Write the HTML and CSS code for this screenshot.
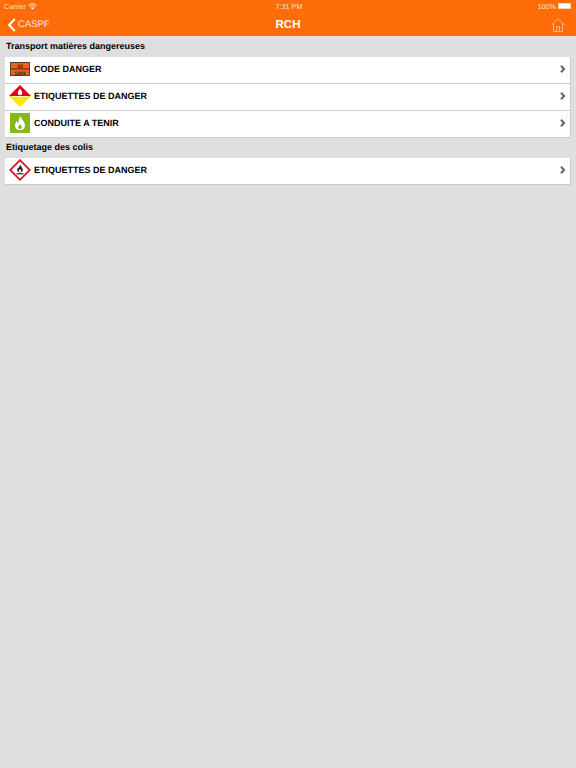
FILE: index.html
```html
<!DOCTYPE html>
<html lang="fr">
<head>
<meta charset="UTF-8">
<title>RCH</title>
<link rel="stylesheet" href="styles.css">
</head>
<body>
<div class="topbar">
  <div class="status">
    <div class="status-left">
      <span>Carrier</span>
      <svg class="wifi" width="9" height="7" viewBox="0 0 10 7"><path d="M5 7 3.400 5.200a2.300 2.300 0 0 1 3.200 0z" fill="#fff"/><path d="M1.900 3.800a4.400 4.400 0 0 1 6.200 0M.5 2.200a6.500 6.500 0 0 1 9 0" fill="none" stroke="#fff" stroke-width="1"/></svg>
    </div>
    <span class="status-time">7:31 PM</span>
    <div class="status-right">
      <span>100%</span>
      <span class="battery"></span>
    </div>
  </div>
  <div class="nav">
    <div class="nav-back">
      <svg width="8" height="14" viewBox="0 0 8 14"><path d="M6.800 1 1.200 7l5.600 6" fill="none" stroke="#fff" stroke-width="2"/></svg>
      <span>CASPF</span>
    </div>
    <div class="nav-title">RCH</div>
    <svg class="nav-home" width="14" height="14" viewBox="0 0 14 14"><path d="M.5 7 7 .7 13.500 7M2.500 5.500v8h9v-8M5.500 13.500V8.500h3v5" fill="none" stroke="#ffb27d" stroke-width="1"/></svg>
  </div>
</div>

<h2 class="section-title">Transport matières dangereuses</h2>
<div class="list">
  <div class="row">
    <svg class="row-icon" width="22" height="16" viewBox="0 0 22 16">
      <rect x="1.500" y="1.500" width="19" height="13" fill="#e8641c" stroke="#5a4030"/>
      <path d="M2 8h18" stroke="#4a2a10" stroke-width="1"/>
      <text x="11" y="6.500" class="plate-num">33</text>
      <text x="11" y="13.500" class="plate-num">1203</text>
    </svg>
    <span class="row-label">CODE DANGER</span>
    <svg class="chevron" width="5" height="8" viewBox="0 0 5 8"><path d="M1 .8 4 4 1 7.200" fill="none" stroke="#666" stroke-width="2"/></svg>
  </div>
  <div class="row">
    <svg class="row-icon" width="22" height="22" viewBox="0 0 22 22">
      <path d="M11 0 22 11H0z" fill="#e2001a"/>
      <path d="M0 11h22L11 22z" fill="#ffe600"/>
      <path d="M11 3.500c1 1.800 2.300 2.800 2.300 4.500a2.300 2.300 0 0 1-4.600 0c0-1.700 1.300-2.700 2.300-4.500z" fill="#fff"/>
      <path d="M3 11.500h16" stroke="#fff" stroke-width=".8"/>
    </svg>
    <span class="row-label">ETIQUETTES DE DANGER</span>
    <svg class="chevron" width="5" height="8" viewBox="0 0 5 8"><path d="M1 .8 4 4 1 7.200" fill="none" stroke="#666" stroke-width="2"/></svg>
  </div>
  <div class="row">
    <svg class="row-icon" width="22" height="20" viewBox="0 0 22 20">
      <rect x="1" width="20" height="20" fill="#86b81c"/>
      <path d="M11.500 3c.5 3 4.500 5 4.500 9.500 0 3-2.200 4.500-5 4.500s-5-1.500-5-4.500c0-2 1-3.500 2-4.500 0 1.500.5 2 1.200 2.300C9.500 7.500 10.500 5 11.500 3z" fill="#fff"/>
      <path d="M11 11c.5 1.200 1.800 1.800 1.800 3.300 0 1-.8 1.700-1.800 1.700s-1.800-.7-1.800-1.700c0-1.500 1.300-2.100 1.800-3.300z" fill="#86b81c"/>
    </svg>
    <span class="row-label">CONDUITE A TENIR</span>
    <svg class="chevron" width="5" height="8" viewBox="0 0 5 8"><path d="M1 .8 4 4 1 7.200" fill="none" stroke="#666" stroke-width="2"/></svg>
  </div>
</div>

<h2 class="section-title section-title-next">Etiquetage des colis</h2>
<div class="list">
  <div class="row">
    <svg class="row-icon" width="22" height="22" viewBox="0 0 22 22">
      <path d="M11 1.200 20.800 11 11 20.800 1.200 11z" fill="#fff" stroke="#d9142b" stroke-width="1.800"/>
      <path d="M11.200 5.800c.3 1.400 2.600 2.600 2.600 5 0 .6-.1 1-.3 1.300a3 3 0 0 1-5 0c-.2-.3-.3-.7-.3-1.300 0-1.200.7-1.900 1.200-2.500 0 .6.200 1 .5 1.100 0-1.200.8-2.300 1.300-3.600z" fill="#222"/>
      <circle cx="11" cy="11.800" r="1.200" fill="#fff"/>
      <path d="M7.500 14.800h7" stroke="#222" stroke-width="1.200"/>
    </svg>
    <span class="row-label">ETIQUETTES DE DANGER</span>
    <svg class="chevron" width="5" height="8" viewBox="0 0 5 8"><path d="M1 .8 4 4 1 7.200" fill="none" stroke="#666" stroke-width="2"/></svg>
  </div>
</div>
</body>
</html>
```

FILE: styles.css
```css
body {
  margin: 0;
  height: 768px;
  overflow: hidden;
  background-color: #dfdfdf;
  font-family: "Liberation Sans", Arial, sans-serif;
  color: #000;
  text-rendering: geometricPrecision;
}
.topbar {
  background-color: #ff6c09;
  color: #fff;
  height: 36px;
}
.status {
  height: 12px;
  padding: 0 5px 0 4px;
  display: flex;
  justify-content: space-between;
  align-items: center;
  font-size: 7.200px;
  color: #ffe0c8;
}
.status-left, .status-right {
  display: flex;
  align-items: center;
  gap: 2px;
  width: 100px;
}
.status-right {
  justify-content: flex-end;
  width: 97px;
}
.battery {
  display: block;
  width: 13px;
  height: 6px;
  background-color: #fff;
  border: 1px solid #ffd0ad;
  box-sizing: border-box;
}
.nav {
  height: 23px;
  padding: 1px 8px 0;
  display: flex;
  justify-content: space-between;
  align-items: center;
}
.nav-back {
  display: flex;
  align-items: center;
  gap: 2px;
  width: 100px;
  font-size: 9.500px;
  color: #ffe6d4;
}
.nav-title {
  font-size: 11.500px;
  font-weight: bold;
}
.nav-home {
  margin-left: 83px;
  margin-right: 3px;
}
.section-title {
  margin: 0;
  padding: 5px 6px 0;
  height: 16px;
  font-size: 9px;
  line-height: 11px;
  font-weight: bold;
}
.section-title-next {
  padding-top: 4px;
  height: 16px;
}
.list {
  margin: 0 5px;
  background-color: #fff;
  border-right: 1px solid #ccc;
}
.row {
  height: 24px;
  padding-bottom: 2px;
  display: flex;
  align-items: center;
  border-bottom: 1px solid #ccc;
}
.row-icon {
  margin-left: 4px;
  flex: none;
}
.row-label {
  margin-left: 3px;
  flex: 1;
  font-size: 9px;
  font-weight: bold;
}
.chevron {
  margin-right: 5px;
}
.plate-num {
  font-size: 5px;
  font-weight: bold;
  text-anchor: middle;
  fill: #2a1a0a;
}
```
